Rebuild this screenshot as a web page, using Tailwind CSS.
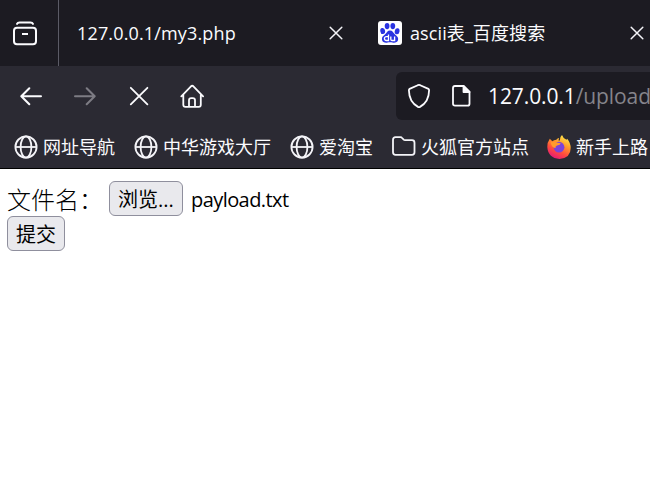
<!DOCTYPE html>
<html lang="zh-CN">
<head>
<meta charset="utf-8">
<title>127.0.0.1/my3.php</title>
<script src="https://cdn.jsdelivr.net/npm/@tailwindcss/browser@4"></script>
</head>
<body class="w-[650px] h-[503px] overflow-hidden bg-white font-['Open_Sans','Noto_Sans_CJK_SC',sans-serif] text-[#fbfbfe] whitespace-nowrap">
<svg class="hidden">
  <symbol id="globe" viewBox="0 0 24 24"><g fill="none" stroke="#f4f4f8" stroke-width="1.8"><circle cx="12" cy="12" r="10.6"/><ellipse cx="12" cy="12" rx="5.4" ry="10.6"/><path d="M1.4 12h21.2"/></g></symbol>
  <symbol id="close" viewBox="0 0 14 14"><path d="M1.2 1.2l11.6 11.6M12.8 1.2L1.2 12.8" fill="none" stroke="#f4f4f8" stroke-width="1.5" stroke-linecap="round"/></symbol>
</svg>
<header>
  <div class="flex h-[66px] bg-[#1c1b22]">
    <div class="flex w-[59px] shrink-0 items-center border-r border-[#5b5b66] pl-3">
      <svg class="size-[26px]" viewBox="0 0 26 26" fill="none" stroke="#fbfbfe" stroke-width="2" stroke-linecap="round"><path d="M5 3.9Q5.600 2.400 7.500 2.400h11Q20.400 2.400 21 3.900"/><rect x="2" y="7.800" width="22" height="16.400" rx="3"/><path d="M10 14h6" stroke-linecap="butt"/></svg>
    </div>
    <div class="flex w-[301px] shrink-0 items-center pl-[18px]">
      <span class="w-[252px] text-[18px] tracking-[0.15px]">127.0.0.1/my3.php</span>
      <svg class="size-[14px]"><use href="#close"/></svg>
    </div>
    <div class="flex w-[290px] shrink-0 items-center pl-[18px]">
      <svg class="size-6 shrink-0" viewBox="0 0 24 24"><rect width="24" height="24" rx="3" fill="#fff"/><g fill="#2932e1"><ellipse cx="4.700" cy="10" rx="2.400" ry="3.100" transform="rotate(-10 4.700 10)"/><ellipse cx="9.100" cy="5.100" rx="2.400" ry="3.100"/><ellipse cx="14.800" cy="5.100" rx="2.400" ry="3.100"/><ellipse cx="19.100" cy="10.300" rx="2.400" ry="3" transform="rotate(10 19.100 10.300)"/><path d="M12 9.600c2.500 0 3.200 2.200 4.800 3.600 2 1.600 3.800 3 3.300 5.500-.6 3-3.600 3.300-5.700 2.800-1.600-.4-3.200-.4-4.800 0-2.300.5-5.100 0-5.600-2.800-.5-2.600 1.300-3.900 3.200-5.500 1.700-1.400 2.200-3.600 4.800-3.600z"/></g><path d="M10.500 13.500v6H8.300a1.900 1.900 0 0 1 0-3.800h2.200M12.800 15.500v2.700q0 1.300 1.300 1.300h2.500v-4" fill="none" stroke="#fff" stroke-width="1.300"/></svg>
      <span class="ml-2 w-[220px] text-[18px] tracking-[0.1px]">ascii表_百度搜索</span>
      <svg class="size-[14px] shrink-0"><use href="#close"/></svg>
    </div>
  </div>
  <nav class="flex h-[60px] items-center bg-[#2b2a33]">
    <svg class="ml-5 h-5 w-[22px] shrink-0" viewBox="0 0 22 20" fill="none" stroke="#fbfbfe" stroke-width="2" stroke-linecap="round" stroke-linejoin="round"><path d="M21 10.300H1.500M9.300 2.300l-8 8 8 8"/></svg>
    <svg class="ml-8 h-5 w-[22px] shrink-0" viewBox="0 0 22 20" fill="none" stroke="#7d7c84" stroke-width="2" stroke-linecap="round" stroke-linejoin="round"><path d="M1 10.300h19.500M12.700 2.300l8 8-8 8"/></svg>
    <svg class="ml-[33px] size-5 shrink-0" viewBox="0 0 20 20" fill="none" stroke="#fbfbfe" stroke-width="1.800" stroke-linecap="round"><path d="M1.800 1.800l16.600 16.600M18.400 1.800L1.800 18.400"/></svg>
    <svg class="ml-[31px] size-6 shrink-0" viewBox="0 0 24 24" fill="none" stroke="#fbfbfe" stroke-width="1.800" stroke-linecap="round" stroke-linejoin="round"><path d="M1.300 12.300L11 2.300q1.200-1 2.400 0l9.700 10M3.300 10.800v10q0 2.100 2.100 2.100h13.300q2.100 0 2.100-2.100v-10M9 22.800v-6.500q0-2.200 2.200-2.200h1.600q2.200 0 2.200 2.200v6.500"/></svg>
    <div class="ml-[192px] flex h-12 w-[270px] shrink-0 items-center rounded-[6px] bg-[#1c1b22] pl-3">
      <svg class="h-6 w-[22px] shrink-0" viewBox="0 0 22 24" fill="none" stroke="#fbfbfe" stroke-width="1.800" stroke-linejoin="round"><path d="M9.800 1.200q1.200-.5 2.400 0l8.200 3.700q.7.400.7 1.400C21 14 18.200 19.500 12 22.900q-1 .5-2 0C3.800 19.500 1 14 .9 6.300q0-1 .7-1.400z"/></svg>
      <svg class="ml-[21px] h-6 w-5 shrink-0" viewBox="0 0 20 24" fill="none" stroke="#fbfbfe" stroke-width="1.800" stroke-linejoin="round"><path d="M4 2h8.500l6 6v11.700q0 2-2 2H4q-2 0-2-2V4q0-2 2-2z"/><path d="M12.500 2v6h6z" fill="#fbfbfe"/></svg>
      <span class="ml-[17px] pt-[2px] text-[21px] tracking-[-0.1px] text-[#85848b]"><span class="text-[#fbfbfe]">127.0.0.1</span>/upload</span>
    </div>
  </nav>
  <div class="flex h-[43px] items-center border-b border-black bg-[#2b2a33] text-[18px]">
    <div class="ml-[14px] flex w-[120px] shrink-0 items-center gap-[5px]"><svg class="size-6"><use href="#globe"/></svg><span class="pt-px">网址导航</span></div>
    <div class="flex w-[156px] shrink-0 items-center gap-[5px]"><svg class="size-6"><use href="#globe"/></svg><span class="pt-px">中华游戏大厅</span></div>
    <div class="flex w-[102px] shrink-0 items-center gap-[5px]"><svg class="size-6"><use href="#globe"/></svg><span class="pt-px">爱淘宝</span></div>
    <div class="flex w-[155px] shrink-0 items-center gap-[5px]"><svg class="size-6" viewBox="0 0 24 24" fill="none" stroke="#f4f4f8" stroke-width="1.800" stroke-linejoin="round"><path d="M3.500 2.200h5q1 0 1.600.8l1.600 1.700q.5.500 1.300.5h7q2.500 0 2.500 2.500v9.600q0 2.500-2.500 2.500H3.500Q1 19.800 1 17.300V4.700q0-2.500 2.500-2.500z"/></svg><span class="pt-px">火狐官方站点</span></div>
    <div class="flex shrink-0 items-center gap-[5px]">
      <svg class="size-6" viewBox="0 0 24 24"><defs><linearGradient id="flame" x1=".8" y1="0" x2=".3" y2="1"><stop offset="0" stop-color="#fff44f"/><stop offset=".35" stop-color="#ffa02b"/><stop offset=".68" stop-color="#ff4b3d"/><stop offset="1" stop-color="#e3157c"/></linearGradient></defs><path d="M2.800 3.700L5.300 6.200Q7 5 9.300 4.800q1.200-1.500 2.800-1.700L11.500 5.500h1.300q-.3-3.500 2.200-5.500 .8 3 4.500 4.700l.7-1q3.500 4.300 3.500 9.300 0 10-11.200 11Q1 23 .3 12 0 7.500 2.800 3.700z" fill="url(#flame)"/><circle cx="12" cy="12.200" r="5.400" fill="#7b43d9"/><path d="M3.500 7.500q3.500-1.800 7 .2l3.300.5q-.4 1.700-3.800 2.200-2 .8-1.400 2.600Q5 13 3.500 7.500z" fill="#ff9b2c"/></svg>
      <span class="pt-px">新手上路</span>
    </div>
  </div>
</header>
<main class="pl-[7px] pt-3 text-black">
  <div class="flex h-[35px] items-center">
    <span class="w-[102px] font-['Noto_Sans_CJK_SC',sans-serif] text-[24px] font-light leading-[35px]">文件名：</span>
    <button class="flex h-[35px] w-[74px] items-center justify-center rounded-[6px] border border-[#8f8f9d] bg-[#e9e9ed] pt-[2px] text-[20px] leading-none">浏览...</button>
    <span class="ml-2 pt-[2px] text-[20px] tracking-[-0.57px]">payload.txt</span>
  </div>
  <button class="flex h-[35px] w-[58px] items-center justify-center rounded-[6px] border border-[#8f8f9d] bg-[#e9e9ed] pt-[2px] text-[20px] leading-none">提交</button>
</main>
</body>
</html>
